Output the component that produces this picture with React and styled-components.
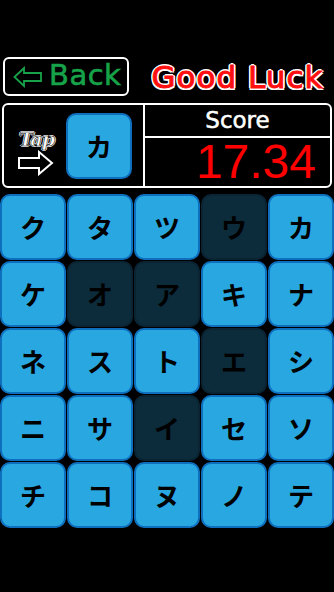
import React from 'react';
import styled, { createGlobalStyle } from 'styled-components';

const GlobalStyle = createGlobalStyle`
  html, body {
    margin: 0;
    padding: 0;
    background: #000;
  }
  body {
    width: 334px;
    height: 592px;
    overflow: hidden;
    font-family: 'DejaVu Sans', sans-serif;
  }
`;

const tiles = [
  ['ク', false], ['タ', false], ['ツ', false], ['ウ', true], ['カ', false],
  ['ケ', false], ['オ', true], ['ア', true], ['キ', false], ['ナ', false],
  ['ネ', false], ['ス', false], ['ト', false], ['エ', true], ['シ', false],
  ['ニ', false], ['サ', false], ['イ', true], ['セ', false], ['ソ', false],
  ['チ', false], ['コ', false], ['ヌ', false], ['ノ', false], ['テ', false],
];

const BackArrow = () => (
  <svg width="30" height="22" viewBox="0 0 30 22">
    <path
      d="M1.5 11 L11 2 L11 7 L28 7 L28 15 L11 15 L11 20 Z"
      fill="none"
      stroke="#17a349"
      strokeWidth="1.8"
      strokeLinejoin="miter"
    />
  </svg>
);

const TapArrow = () => (
  <svg width="38" height="26" viewBox="0 0 38 26">
    <path
      d="M2 8 L22 8 L22 2 L35 13 L22 24 L22 18 L2 18 Z"
      fill="#000"
      stroke="#fff"
      strokeWidth="2"
    />
  </svg>
);

const App = () => {
  return (
    <Screen>
      <GlobalStyle />
      <TopBar>
        <BackButton>
          <BackArrow />
          <BackLabel>Back</BackLabel>
        </BackButton>
        <Title>Good Luck</Title>
      </TopBar>

      <Panel>
        <TapSide>
          <TapHint>
            <TapWord>Tap</TapWord>
            <TapArrow />
          </TapHint>
          <Tile small>カ</Tile>
        </TapSide>
        <ScoreSide>
          <ScoreLabel>Score</ScoreLabel>
          <ScoreValue>17.34</ScoreValue>
        </ScoreSide>
      </Panel>

      <Board>
        {tiles.map(([ch, done], i) => (
          <Tile key={i} done={done}>{ch}</Tile>
        ))}
      </Board>
    </Screen>
  );
};

const Screen = styled.div`
  width: 334px;
  height: 592px;
  padding-top: 57px;
  box-sizing: border-box;
  background: #000;
`;

const TopBar = styled.div`
  display: flex;
  align-items: center;
  height: 39px;
  padding-left: 3px;
`;

const BackButton = styled.div`
  width: 126px;
  height: 39px;
  box-sizing: border-box;
  border: 2px solid #fff;
  border-radius: 6px;
  display: flex;
  align-items: center;
  gap: 6px;
  padding-left: 8px;
`;

const BackLabel = styled.span`
  font-family: 'DejaVu Sans', sans-serif;
  font-size: 29px;
  color: #17a349;
  letter-spacing: 0.5px;
  line-height: 1;
  margin-top: -2px;
  -webkit-text-stroke: 0.6px #17a349;
`;

const Title = styled.div`
  flex: 1;
  text-align: center;
  padding-left: 12px;
  font-family: 'DejaVu Sans', sans-serif;
  font-size: 31px;
  letter-spacing: 1px;
  color: #ff1010;
  line-height: 1;
  margin-top: 2px;
  -webkit-text-stroke: 1px #ff1010;
  text-shadow:
    2px 0 0 #fff, -2px 0 0 #fff, 0 2px 0 #fff, 0 -2px 0 #fff,
    1.5px 1.5px 0 #fff, -1.5px -1.5px 0 #fff, 1.5px -1.5px 0 #fff, -1.5px 1.5px 0 #fff;
`;

const Panel = styled.div`
  margin: 7px 2px 6px 2px;
  height: 85px;
  box-sizing: border-box;
  border: 2px solid #fff;
  border-radius: 6px;
  display: flex;
`;

const TapSide = styled.div`
  width: 141px;
  box-sizing: border-box;
  border-right: 2px solid #fff;
  display: flex;
  align-items: center;
  padding-left: 13px;
  gap: 11px;
`;

const TapHint = styled.div`
  display: flex;
  flex-direction: column;
  align-items: flex-start;
  margin-top: 14px;
`;

const TapWord = styled.span`
  font-family: 'DejaVu Serif', serif;
  font-weight: bold;
  font-style: italic;
  font-size: 19px;
  line-height: 1;
  color: #fff;
  letter-spacing: -1px;
  -webkit-text-stroke: 0.6px #000;
  text-shadow:
    1px 0 0 #fff, -1px 0 0 #fff, 0 1px 0 #fff, 0 -1px 0 #fff;
  margin-left: 2px;
  margin-bottom: 1px;
`;

const ScoreSide = styled.div`
  flex: 1;
  display: flex;
  flex-direction: column;
`;

const ScoreLabel = styled.div`
  height: 33px;
  box-sizing: border-box;
  border-bottom: 2px solid #fff;
  display: flex;
  align-items: center;
  justify-content: center;
  font-family: 'DejaVu Sans', sans-serif;
  font-size: 23px;
  color: #fff;
  -webkit-text-stroke: 0.5px #fff;
  padding-bottom: 2px;
`;

const ScoreValue = styled.div`
  flex: 1;
  display: flex;
  align-items: center;
  justify-content: flex-end;
  padding-right: 14px;
  font-family: 'Liberation Sans', Arial, sans-serif;
  font-size: 48px;
  color: #ff0000;
  line-height: 1;
`;

const Board = styled.div`
  display: grid;
  grid-template-columns: repeat(5, 66px);
  grid-auto-rows: 66px;
  gap: 1px;
`;

const Tile = styled.div`
  width: ${p => (p.small ? '66px' : 'auto')};
  height: ${p => (p.small ? '66px' : 'auto')};
  box-sizing: border-box;
  border-radius: 10px;
  background: ${p => (p.done ? '#0c2b3b' : '#29a7e1')};
  border: 2px solid ${p => (p.done ? '#0a2433' : '#0d6fbd')};
  display: flex;
  align-items: center;
  justify-content: center;
  font-family: 'Noto Sans CJK JP', sans-serif;
  font-weight: 700;
  font-size: 26px;
  color: #000;
  line-height: 1;
`;

export default App;
